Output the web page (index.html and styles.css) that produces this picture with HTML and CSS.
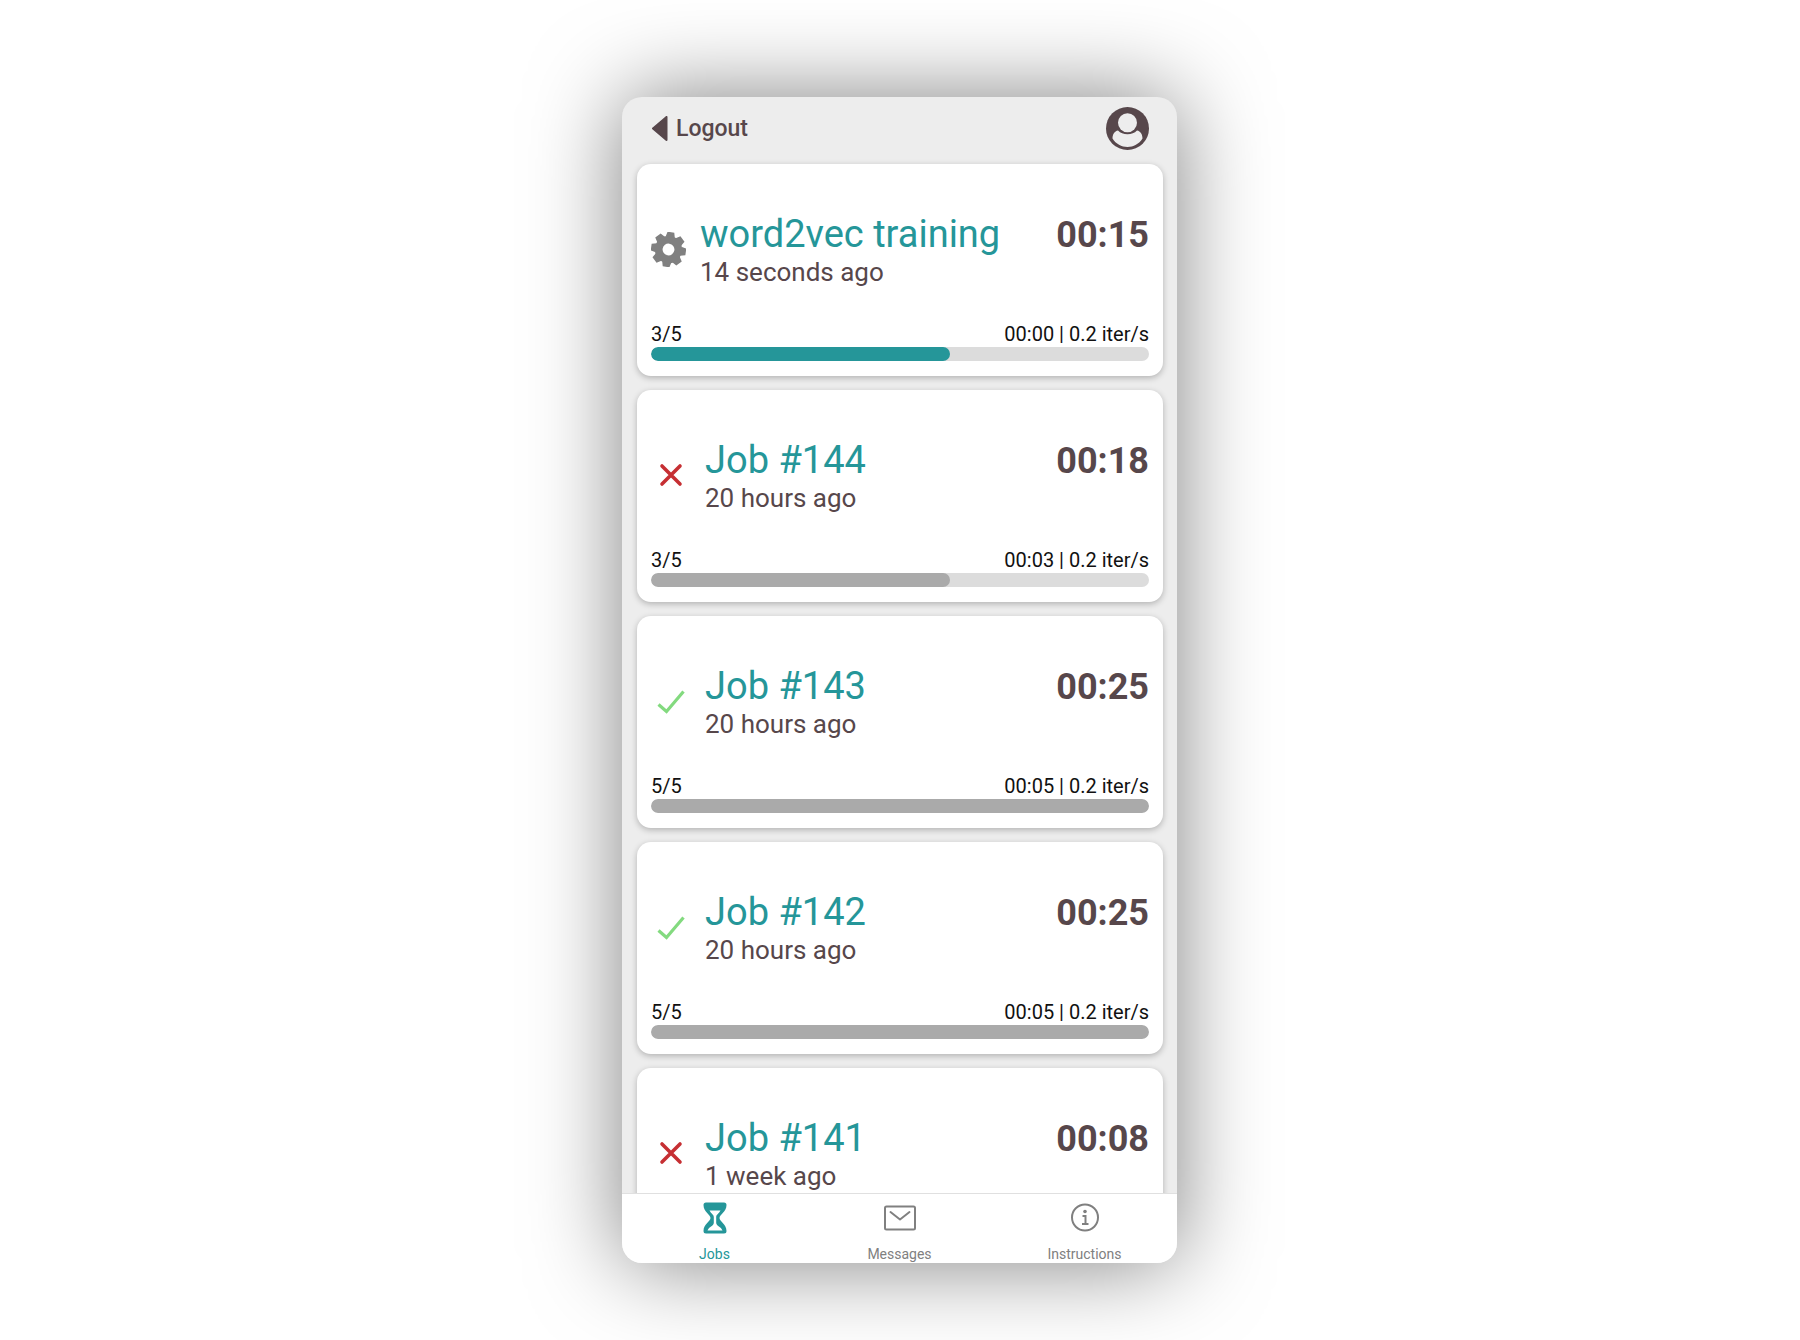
FILE: index.html
```html
<!DOCTYPE html>
<html lang="en">
<head>
<meta charset="utf-8">
<meta name="viewport" content="width=device-width, initial-scale=1">
<title>Jobs</title>
<link rel="stylesheet" href="styles.css">
</head>
<body>
<svg class="sprite" aria-hidden="true">
  <symbol id="cross" viewBox="0 0 40 40"><path d="M11 11 29 29M29 11 11 29" fill="none" stroke="currentColor" stroke-width="3.6" stroke-linecap="round"/></symbol>
  <symbol id="check" viewBox="0 0 40 40"><path d="M7.5 23.5 15.5 30.5 32.5 10.5" fill="none" stroke="currentColor" stroke-width="3.2"/></symbol>
</svg>
<main class="phone">
  <header class="topbar">
    <button class="logout" type="button">
      <svg class="caret" viewBox="0 0 17 26" aria-hidden="true"><path d="M15.5 1v23L2 12.500z" fill="currentColor" stroke="currentColor" stroke-width="2" stroke-linejoin="round"/></svg>
      Logout
    </button>
    <button class="profile" type="button" aria-label="Profile">
      <svg class="avatar" viewBox="0 0 43 43" aria-hidden="true"><circle cx="21.500" cy="21.500" r="21.500" fill="currentColor"/><path d="M12 23.500C8.500 24 6.500 27.500 6.500 31.500 10 37 15.500 40 21.500 40S33 37 36.500 31.500C36.500 27.500 34.500 24 31 23.500 28.500 26 25.500 27.300 21.500 27.300S14.500 26 12 23.500Z" fill="#ededed"/><circle cx="21.500" cy="15.700" r="9.500" fill="#ededed"/></svg>
    </button>
  </header>

  <section class="jobs" aria-label="Jobs">
    <article class="card">
      <div class="summary">
        <svg class="gear" viewBox="-17 -17 34 34" aria-hidden="true"><g fill="currentColor" transform="rotate(8)"><circle r="9.500" fill="none" stroke="currentColor" stroke-width="7.500"/><path id="teeth" d="M-4.500-12-3.300-17H3.300L4.500-12ZM-4.500 12-3.300 17H3.300L4.500 12ZM-12-4.500-17-3.300V3.300L-12 4.500ZM12-4.500 17-3.300V3.300L12 4.500Z"/><use href="#teeth" transform="rotate(45)"/></g></svg>
        <div class="info"><h2>word2vec training</h2><time class="elapsed">00:15</time><p>14 seconds ago</p></div>
      </div>
      <div class="meta"><label for="p1">3/5</label><span>00:00 | 0.2 iter/s</span></div>
      <progress class="active" id="p1" value="3" max="5"></progress>
    </article>
    <article class="card">
      <div class="summary">
        <svg class="status failed" aria-hidden="true"><use href="#cross"/></svg>
        <div class="info"><h2>Job #144</h2><time class="elapsed">00:18</time><p>20 hours ago</p></div>
      </div>
      <div class="meta"><label for="p2">3/5</label><span>00:03 | 0.2 iter/s</span></div>
      <progress id="p2" value="3" max="5"></progress>
    </article>
    <article class="card">
      <div class="summary">
        <svg class="status done" aria-hidden="true"><use href="#check"/></svg>
        <div class="info"><h2>Job #143</h2><time class="elapsed">00:25</time><p>20 hours ago</p></div>
      </div>
      <div class="meta"><label for="p3">5/5</label><span>00:05 | 0.2 iter/s</span></div>
      <progress id="p3" value="5" max="5"></progress>
    </article>
    <article class="card">
      <div class="summary">
        <svg class="status done" aria-hidden="true"><use href="#check"/></svg>
        <div class="info"><h2>Job #142</h2><time class="elapsed">00:25</time><p>20 hours ago</p></div>
      </div>
      <div class="meta"><label for="p4">5/5</label><span>00:05 | 0.2 iter/s</span></div>
      <progress id="p4" value="5" max="5"></progress>
    </article>
    <article class="card">
      <div class="summary">
        <svg class="status failed" aria-hidden="true"><use href="#cross"/></svg>
        <div class="info"><h2>Job #141</h2><time class="elapsed">00:08</time><p>1 week ago</p></div>
      </div>
    </article>
  </section>

  <nav class="tabs">
    <a class="tab current" href="#jobs" aria-current="page">
      <svg viewBox="0 0 32 32" aria-hidden="true"><path d="M7 .5H25Q27.500.5 27.500 3C27.500 10 20.500 12.500 20.500 16S27.500 22 27.500 29Q27.500 31.500 25 31.500H7Q4.500 31.500 4.500 29C4.500 22 11.500 19.500 11.500 16S4.500 10 4.500 3Q4.500.5 7 .5Z" fill="currentColor"/><path d="M10.500 8.500H21.500C20 11.500 17.200 12.500 17.200 15V21C17.500 24 22 24.500 23.500 28.500H8.500C10 24.500 14.500 24 14.800 21V15C14.800 12.500 12 11.500 10.500 8.500Z" fill="#fff"/></svg>
      Jobs
    </a>
    <a class="tab" href="#messages">
      <svg viewBox="0 0 32 32" aria-hidden="true"><g fill="none" stroke="currentColor" stroke-width="2" stroke-linecap="round" stroke-linejoin="round"><rect x="1" y="4.500" width="30" height="23" rx="1.500"/><path d="M6.500 10 16 17.500 25.500 10"/></g></svg>
      Messages
    </a>
    <a class="tab" href="#instructions">
      <svg viewBox="0 0 32 32" aria-hidden="true"><circle cx="16" cy="15.500" r="13" fill="none" stroke="currentColor" stroke-width="2"/><circle cx="16" cy="9.500" r="1.800" fill="currentColor"/><path d="M13.500 14H16.500V22M13 22H19.500" fill="none" stroke="currentColor" stroke-width="2"/></svg>
      Instructions
    </a>
  </nav>
</main>
</body>
</html>
```
FILE: styles.css
```css
* { box-sizing: border-box; }

body {
  margin: 0;
  height: 100vh;
  padding: 97px 17px 77px 16px;
  display: flex;
  justify-content: center;
  background: #fff;
  color: #57474b;
  font-family: Roboto, sans-serif;
}

.sprite { display: none; }

h2, p { margin: 0; font-weight: 400; }

button {
  border: 0;
  padding: 0;
  background: none;
  color: inherit;
  font: inherit;
}

.phone {
  flex: 0 1 555px;
  min-width: 0;
  display: flex;
  flex-direction: column;
  overflow: hidden;
  border-radius: 20px;
  background: #ededed;
  box-shadow: 0 0 90px rgba(0, 0, 0, 0.5);
}

.topbar {
  display: flex;
  align-items: center;
  justify-content: space-between;
  padding: 10px 28px 4px 29px;
}

.logout {
  display: flex;
  align-items: center;
  gap: 8px;
  font-size: 23px;
  font-weight: 500;
  line-height: 28px;
}

.caret { width: 17px; height: 26px; }

.avatar { display: block; width: 43px; height: 43px; }

.jobs {
  flex: 1;
  min-height: 0;
  display: flex;
  flex-direction: column;
  gap: 14px;
  padding: 10px 14px 14px 15px;
  overflow-y: auto;
  scrollbar-width: none;
}

.card {
  flex: none;
  display: flex;
  flex-direction: column;
  padding: 14px 14px 15px;
  border-radius: 14px;
  background: #fff;
  box-shadow: 0 2px 6px rgba(0, 0, 0, 0.25);
}

.summary {
  height: 142px;
  display: flex;
  align-items: center;
  gap: 14px;
}

.gear { flex: none; width: 35px; height: 35px; color: #808080; }
.status { flex: none; width: 40px; height: 40px; }
.failed { color: #c62f33; }
.done { color: #83da7f; }

.info {
  flex: 1;
  display: grid;
  grid-template-columns: 1fr auto;
  align-items: baseline;
}

.info h2 { font-size: 38px; line-height: 44px; color: #259699; }
.info p { font-size: 26px; line-height: 30px; }
.elapsed { font-size: 36px; font-weight: 700; line-height: 44px; }

.meta {
  display: flex;
  justify-content: space-between;
  margin: 3px 0 2px;
  font-size: 20px;
  line-height: 22px;
  color: #111;
}

progress {
  appearance: none;
  display: block;
  width: 100%;
  height: 14px;
  border: 0;
  border-radius: 7px;
  overflow: hidden;
  background: #dcdcdc;
}

progress::-webkit-progress-bar { background: #dcdcdc; }
progress::-webkit-progress-value { border-radius: 7px; background: #aaa; }
progress.active::-webkit-progress-value { background: #259699; }

.tabs {
  display: grid;
  grid-template-columns: repeat(3, 1fr);
  border-top: 1px solid #e0e0e0;
  background: #fff;
}

.tab {
  display: flex;
  flex-direction: column;
  align-items: center;
  gap: 11px;
  padding-top: 8px;
  font-size: 14px;
  line-height: 18px;
  color: #808080;
  text-decoration: none;
}

.tab svg { width: 32px; height: 32px; }
.tab.current { color: #259699; }
```
